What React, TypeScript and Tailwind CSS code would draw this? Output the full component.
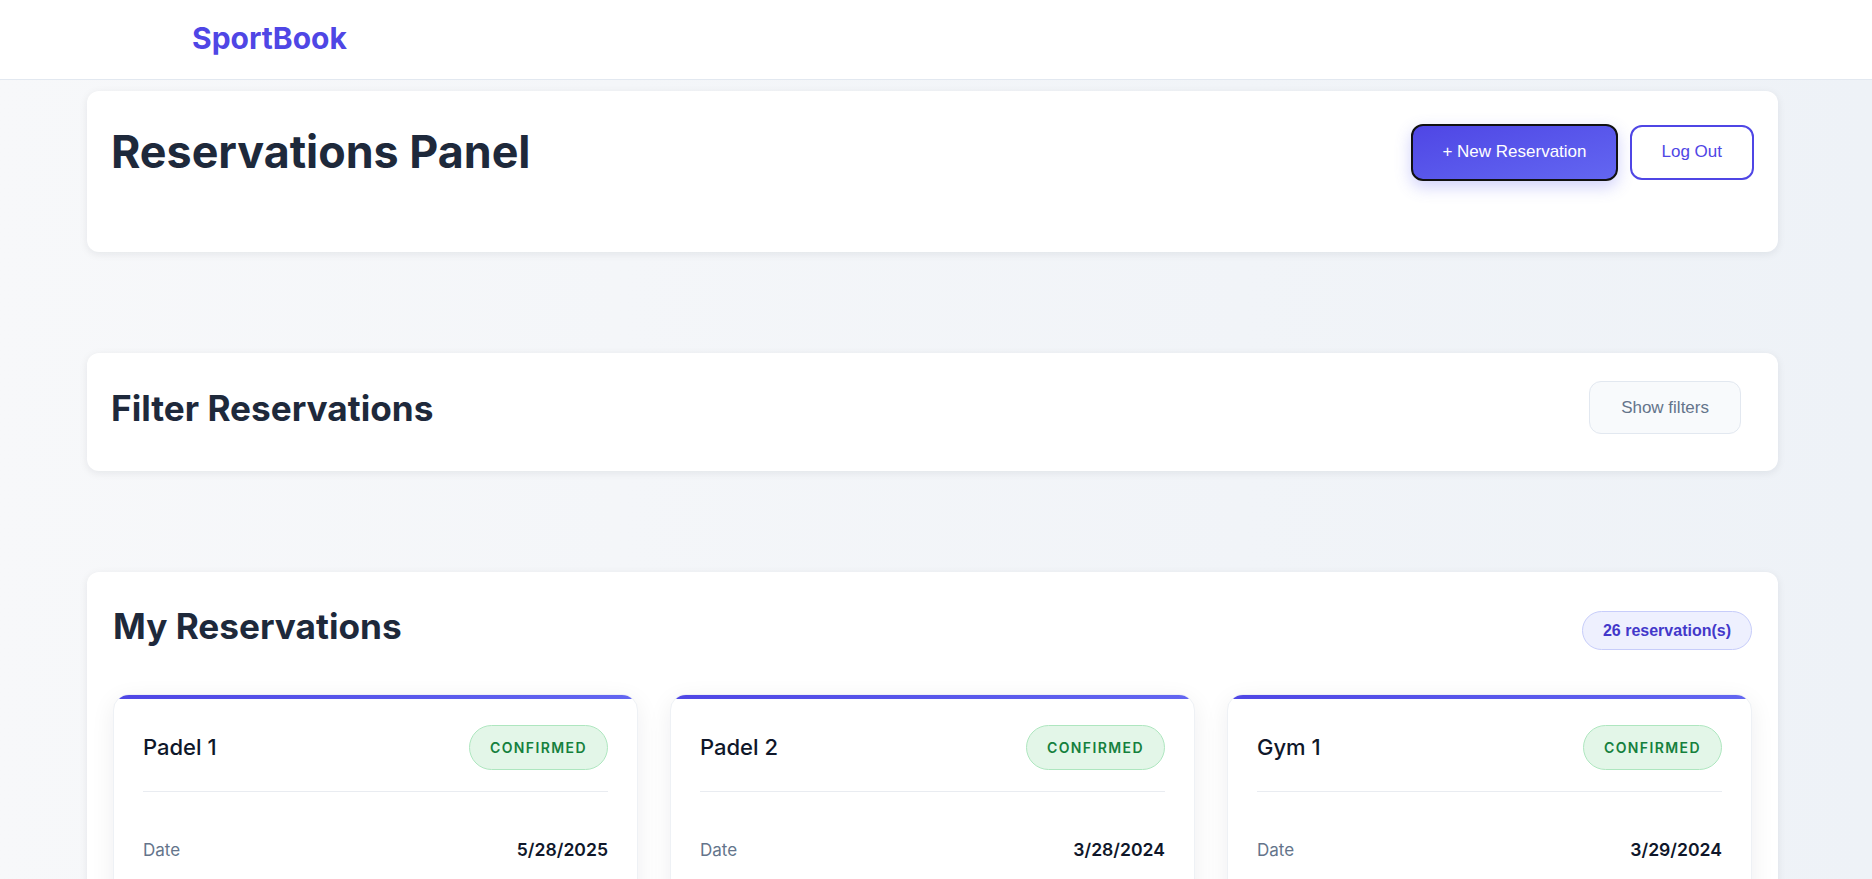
import React from "react";

interface Reservation {
  court: string;
  status: string;
  date: string;
  time: string;
}

const reservations: Reservation[] = [
  { court: "Padel 1", status: "CONFIRMED", date: "5/28/2025", time: "10:00 - 11:30" },
  { court: "Padel 2", status: "CONFIRMED", date: "3/28/2024", time: "18:00 - 19:30" },
  { court: "Gym 1", status: "CONFIRMED", date: "3/29/2024", time: "09:00 - 10:00" },
  { court: "Tennis 1", status: "CONFIRMED", date: "4/02/2024", time: "17:00 - 18:00" },
  { court: "Padel 1", status: "CONFIRMED", date: "4/05/2024", time: "20:00 - 21:30" },
  { court: "Pool", status: "CONFIRMED", date: "4/09/2024", time: "08:00 - 09:00" },
];

const ReservationCard: React.FC<{ r: Reservation }> = ({ r }) => {
  return (
    <div className="relative overflow-hidden bg-white rounded-2xl border border-[#eef1f5] shadow-[0_6px_24px_rgba(15,23,42,0.07)] px-[29px] pt-[30px] pb-7">
      <div className="absolute top-0 left-0 right-0 h-1 bg-gradient-to-r from-[#4f46e5] to-[#6366f1]" />
      <div className="flex items-center justify-between pb-[21px] border-b border-[#e9ecf1]">
        <h3 className="text-[22px] font-medium text-[#0f172a]">{r.court}</h3>
        <span className="px-5 py-3 leading-[19px] rounded-full bg-[#e3f6e8] border border-[#aee6bf] text-[#15803d] text-[14px] font-semibold tracking-[0.1em]">
          {r.status}
        </span>
      </div>
      <div className="mt-[46px] flex flex-col gap-5">
        <div className="flex items-center justify-between leading-6">
          <span className="text-[#64748b] text-[17px]">Date</span>
          <span className="font-semibold text-[#0f172a] text-[17.6px]">{r.date}</span>
        </div>
        <div className="flex items-center justify-between leading-6">
          <span className="text-[#64748b] text-[17px]">Time</span>
          <span className="font-semibold text-[#0f172a] text-[17.6px]">{r.time}</span>
        </div>
      </div>
    </div>
  );
};

export default function App() {
  return (
    <div className="min-h-screen bg-gradient-to-r from-[#f7f8fa] to-[#eef2f7] font-['Inter',sans-serif] pb-16">
      <header className="h-20 bg-white border-b border-[#e2e8f0] flex items-center">
        <div className="pl-[192px] pb-1">
          <span className="text-3xl font-bold text-[#4f46e5]">SportBook</span>
        </div>
      </header>

      <main className="pl-[87px] pr-[94px] pt-[11px]">
        {/* panel header */}
        <section className="bg-white rounded-xl shadow-[0_2px_8px_rgba(15,23,42,0.08)] pl-6 pr-6 pt-8 pb-[71px]">
          <div className="flex items-center justify-between h-[58px]">
            <h1 className="text-[44.8px] leading-none font-bold text-[#1e293b]">Reservations Panel</h1>
            <div className="flex items-center gap-3 font-['Liberation_Sans',Arial,sans-serif] text-[17px]">
              <button className="h-[57px] px-[29px] rounded-xl border-2 border-[#111] text-white bg-gradient-to-br from-[#4f46e5] to-[#6366f1] shadow-[0_6px_16px_rgba(99,102,241,0.3)]">
                + New Reservation
              </button>
              <button className="h-[55px] px-[30px] rounded-xl border-2 border-[#4f46e5] text-[#4f46e5] bg-white">
                Log Out
              </button>
            </div>
          </div>
        </section>

        {/* filters */}
        <section className="mt-[101px] bg-white rounded-xl shadow-[0_2px_8px_rgba(15,23,42,0.08)] pl-6 pr-[37px] pt-7 pb-[37px]">
          <div className="flex items-center justify-between">
            <h2 className="text-[35.2px] leading-10 font-bold text-[#1e293b]">Filter Reservations</h2>
            <button className="h-[53px] px-[31px] rounded-xl bg-[#f8fafc] border border-[#e2e8f0] text-[#64748b] text-[17px] font-['Liberation_Sans',Arial,sans-serif]">
              Show filters
            </button>
          </div>
        </section>

        {/* reservations list */}
        <section className="mt-[101px] bg-white rounded-xl shadow-[0_2px_8px_rgba(15,23,42,0.08)] px-[26px] pt-[34px] pb-8">
          <div className="flex items-center justify-between">
            <h2 className="text-[35.2px] leading-10 font-bold text-[#1e293b] mb-[9px]">My Reservations</h2>
            <span className="px-5 py-2.5 leading-[17px] rounded-full bg-[#eef0fe] border border-[#c7cdfa] text-[#4338ca] text-[16px] font-bold font-['Liberation_Sans',Arial,sans-serif]">
              26 reservation(s)
            </span>
          </div>
          <div className="mt-[39px] grid grid-cols-3 gap-8">
            {reservations.map((r, i) => (
              <ReservationCard key={i} r={r} />
            ))}
          </div>
        </section>
      </main>
    </div>
  );
}
